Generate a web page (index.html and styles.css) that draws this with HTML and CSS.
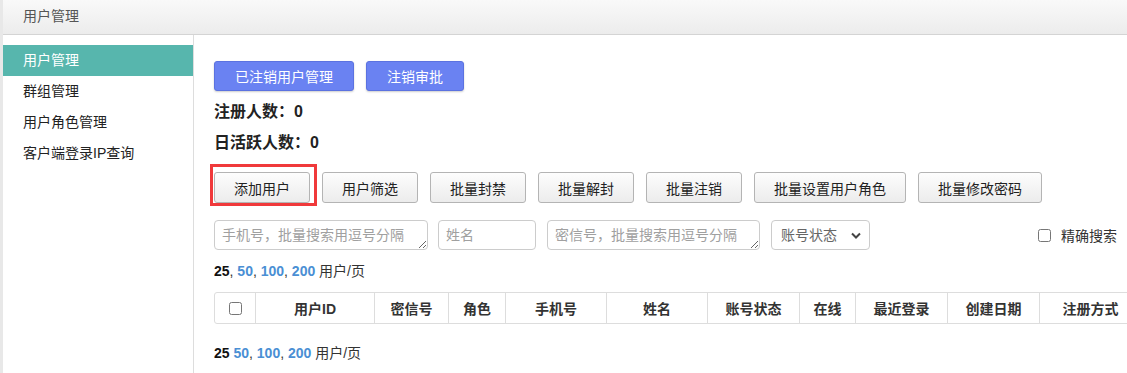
FILE: index.html
```html
<!DOCTYPE html>
<html lang="zh-CN">
<head>
    <meta charset="UTF-8">
    <title>用户管理</title>
    <link rel="stylesheet" href="styles.css">
</head>
<body>
    <div class="page">
        <div class="page-header">用户管理</div>
        <div class="layout">
            <ul class="sidebar">
                <li class="active">用户管理</li>
                <li>群组管理</li>
                <li>用户角色管理</li>
                <li>客户端登录IP查询</li>
            </ul>
            <div class="main">
                <div class="top-actions">
                    <button class="btn-primary">已注销用户管理</button>
                    <button class="btn-primary">注销审批</button>
                </div>
                <div class="stat">注册人数：0</div>
                <div class="stat">日活跃人数：0</div>

                <div class="toolbar">
                    <button class="btn highlight">添加用户</button>
                    <button class="btn">用户筛选</button>
                    <button class="btn">批量封禁</button>
                    <button class="btn">批量解封</button>
                    <button class="btn">批量注销</button>
                    <button class="btn">批量设置用户角色</button>
                    <button class="btn">批量修改密码</button>
                </div>

                <div class="filters">
                    <textarea class="field wide" rows="1" placeholder="手机号，批量搜索用逗号分隔"></textarea>
                    <input class="field narrow" type="text" placeholder="姓名">
                    <textarea class="field wide mid" rows="1" placeholder="密信号，批量搜索用逗号分隔"></textarea>
                    <div class="select-wrap">
                        <select class="field select">
                            <option>账号状态</option>
                        </select>
                        <svg class="chevron" width="10" height="7" viewBox="0 0 10 7"><path d="M1 1.5 L5 5.5 L9 1.5" fill="none" stroke="#444" stroke-width="2"/></svg>
                    </div>
                    <label class="exact"><input type="checkbox"> 精确搜索</label>
                </div>

                <div class="pager"><b>25</b>, <a>50</a>, <a>100</a>, <a>200</a> 用户/页</div>

                <div class="table-wrap">
                    <table class="users">
                        <colgroup>
                            <col style="width: 40px">
                            <col style="width: 119px">
                            <col style="width: 74px">
                            <col style="width: 57px">
                            <col style="width: 101px">
                            <col style="width: 101px">
                            <col style="width: 92px">
                            <col style="width: 56px">
                            <col style="width: 92px">
                            <col style="width: 92px">
                            <col style="width: 102px">
                        </colgroup>
                        <thead>
                            <tr>
                                <th><input type="checkbox"></th>
                                <th>用户ID</th>
                                <th>密信号</th>
                                <th>角色</th>
                                <th>手机号</th>
                                <th>姓名</th>
                                <th>账号状态</th>
                                <th>在线</th>
                                <th>最近登录</th>
                                <th>创建日期</th>
                                <th>注册方式</th>
                            </tr>
                        </thead>
                    </table>
                </div>

                <div class="pager bottom"><b>25</b> <a>50</a>, <a>100</a>, <a>200</a> 用户/页</div>
            </div>
        </div>
    </div>
</body>
</html>
```

FILE: styles.css
```css
body {
    margin: 0;
    font-family: "Liberation Sans", "Noto Sans CJK SC", sans-serif;
    font-size: 14px;
    color: #333;
    background: #fff;
    overflow: hidden;
}

.page {
    height: 373px;
    border-left: 3px solid #e8e8e8;
    box-sizing: border-box;
}

.page-header {
    height: 34px;
    line-height: 32px;
    padding-left: 20px;
    color: #555;
    background: linear-gradient(to bottom, #f9f9f9, #ececec);
    border-bottom: 1px solid #d4d4d4;
}

.layout {
    display: flex;
    height: 338px;
}

/* left menu */
.sidebar {
    list-style: none;
    margin: 0;
    padding: 10px 0 0;
    width: 190px;
    flex: none;
    border-right: 1px solid #ddd;
}

.sidebar li {
    height: 31px;
    line-height: 31px;
    padding-left: 20px;
    color: #222;
}

.sidebar li.active {
    background-color: #57b6ad;
    color: #fff;
}

.main {
    flex: 1;
    min-width: 0;
    padding: 26px 0 0 20px;
    overflow: hidden;
}

.top-actions {
    display: flex;
    gap: 12px;
    margin-bottom: 5px;
}

.btn-primary {
    height: 30px;
    padding: 0 20px;
    font-family: inherit;
    font-size: 14px;
    color: #fff;
    background-color: #6a82f2;
    border: 1px solid #5b72e0;
    border-radius: 3px;
    box-shadow: 0 1px 2px rgba(0, 0, 0, 0.2);
}

.stat {
    font-size: 16px;
    font-weight: bold;
    line-height: 31px;
    color: #222;
}

.toolbar {
    display: flex;
    gap: 12px;
    margin-top: 14px;
}

.btn {
    height: 31px;
    padding: 0 19px;
    font-family: inherit;
    font-size: 14px;
    color: #222;
    background: linear-gradient(to bottom, #fdfdfd, #ececec);
    border: 1px solid #b4b4b4;
    border-radius: 3px;
}

/* red annotation box around the add button */
.btn.highlight {
    position: relative;
}

.btn.highlight::after {
    content: "";
    position: absolute;
    top: -9px;
    left: -5px;
    right: -8px;
    bottom: -4px;
    border: 3px solid #f0393b;
    pointer-events: none;
}

.filters {
    display: flex;
    align-items: center;
    gap: 10px;
    margin-top: 17px;
    padding-right: 10px;
}

.field {
    box-sizing: border-box;
    height: 30px;
    padding: 4px 7px;
    font-family: inherit;
    font-size: 14px;
    color: #333;
    border: 1px solid #ccc;
    border-radius: 4px;
    background: #fff;
}

.field::placeholder {
    color: #a0a0a0;
}

textarea.field {
    width: 214px;
    line-height: 20px;
    resize: both;
}

textarea.field.mid {
    width: 213px;
    margin-left: 1px;
}

.field.narrow {
    width: 98px;
}

.select-wrap {
    position: relative;
    margin-left: 1px;
}

.field.select {
    width: 99px;
    appearance: none;
    -webkit-appearance: none;
    color: #666;
    padding-left: 9px;
}

.chevron {
    position: absolute;
    right: 9px;
    top: 12px;
    pointer-events: none;
}

.exact {
    margin-left: auto;
    display: flex;
    align-items: center;
    gap: 6px;
    color: #333;
}

.exact input {
    margin: 0 4px 0 0;
    width: 13px;
    height: 13px;
}

.pager {
    margin-top: 12px;
    font-size: 14px;
    line-height: 19px;
    color: #333;
}

.pager b {
    color: #111;
}

.pager a {
    color: #4a8fd4;
    font-weight: bold;
    cursor: pointer;
}

.pager.bottom {
    margin-top: 20px;
}

.table-wrap {
    margin-top: 11px;
    width: 1000px;
}

.users {
    border-collapse: separate;
    border-spacing: 0;
    table-layout: fixed;
    width: 926px;
    border: 1px solid #ddd;
    border-radius: 3px;
}

.users th {
    height: 30px;
    padding: 0;
    font-size: 14px;
    font-weight: bold;
    color: #333;
    text-align: center;
    border-left: 1px solid #ddd;
}

.users th:first-child {
    border-left: 0;
}

.users th input {
    width: 13px;
    height: 13px;
    margin: 3px 0 0;
}
```
